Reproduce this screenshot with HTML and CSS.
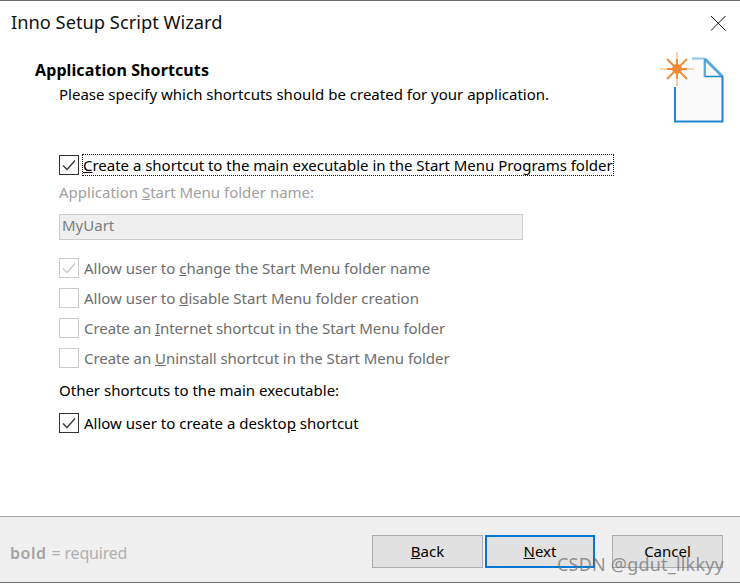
FILE: index.html
```html
<!DOCTYPE html>
<html lang="en">
<head>
<meta charset="utf-8">
<title>Inno Setup Script Wizard</title>
<link rel="stylesheet" href="styles.css">
</head>
<body>
<div class="window">
  <header class="titlebar">
    <span class="title">Inno Setup Script Wizard</span>
    <svg class="close" width="16" height="16" viewBox="0 0 16 16"><path d="M1 1L15.500 15.500M15.500 1L1 15.500" stroke="#111" stroke-width="1" fill="none"/></svg>
  </header>
  <section class="heading">
    <div class="heading-text">
      <h1 class="page-title">Application Shortcuts</h1>
      <p class="page-sub">Please specify which shortcuts should be created for your application.</p>
    </div>
    <svg class="wizard-icon" width="64" height="72" viewBox="0 0 64 72">
      <path d="M32 7.500H44.500L62.500 25.500V71.500H14.500V35" fill="#fbfbfb" stroke="none"/>
      <path d="M32 7.500H44.500V25.500H62.500" fill="none" stroke="#8cc3e6" stroke-width="2"/>
      <path d="M45 8L62.500 25.500" fill="none" stroke="#5aa9dc" stroke-width="3"/>
      <path d="M45 8V25.500H62" fill="none" stroke="#1f86c8" stroke-width="1"/>
      <path d="M62.500 25V70.500H15V36" fill="none" stroke="#1f86c8" stroke-width="2"/>
      <path d="M17 69.500H61" fill="none" stroke="#8cc3e6" stroke-width="1"/>
      <g stroke="#f6b074" stroke-width="1.200" fill="none">
        <path d="M0 18H34"/>
        <path d="M17 1V35"/>
      </g>
      <g stroke="#ef8b38" stroke-width="1.800" fill="none">
        <path d="M7 8L27 28M27 8L7 28"/>
        <path d="M7 18H27M17 8V28"/>
      </g>
      <circle cx="17" cy="18" r="5" fill="#ef8b38"/>
    </svg>
  </section>
  <main class="content">
    <label class="row first">
      <span class="box on"><svg viewBox="0 0 18 18" width="18" height="18"><path d="M3 9.500L7 13.500L15 4.500" fill="none" stroke="#333" stroke-width="1.300"/></svg></span>
      <span class="focus"><u>C</u>reate a shortcut to the main executable in the Start Menu Programs folder</span>
    </label>
    <div class="field-label"><span>Application <u>S</u>tart Menu folder name:</span></div>
    <div class="input">MyUart</div>
    <label class="row dim r1">
      <span class="box off"><svg viewBox="0 0 18 18" width="18" height="18"><path d="M3 9.500L7 13.500L15 4.500" fill="none" stroke="#c4c4c4" stroke-width="1.300"/></svg></span>
      <span>Allow user to <u>c</u>hange the Start Menu folder name</span>
    </label>
    <label class="row dim">
      <span class="box off"></span>
      <span>Allow user to <u>d</u>isable Start Menu folder creation</span>
    </label>
    <label class="row dim tight">
      <span class="box off"></span>
      <span>Create an <u>I</u>nternet shortcut in the Start Menu folder</span>
    </label>
    <label class="row dim tight">
      <span class="box off"></span>
      <span>Create an <u>U</u>ninstall shortcut in the Start Menu folder</span>
    </label>
    <div class="other">Other shortcuts to the main executable:</div>
    <label class="row desk">
      <span class="box on"><svg viewBox="0 0 18 18" width="18" height="18"><path d="M3 9.500L7 13.500L15 4.500" fill="none" stroke="#333" stroke-width="1.300"/></svg></span>
      <span>Allow user to create a deskto<u>p</u> shortcut</span>
    </label>
  </main>
  <footer class="footer">
    <div class="legend"><b>bold</b> <span class="eq">= required</span></div>
    <div class="buttons">
      <button class="btn"><u>B</u>ack</button>
      <button class="btn primary"><u>N</u>ext</button>
      <button class="btn cancel">Cancel</button>
    </div>
    <div class="watermark">CSDN @gdut_llkkyy</div>
  </footer>
</div>
</body>
</html>
```
FILE: styles.css
```css
* { box-sizing: border-box; }
html, body { margin: 0; padding: 0; background: #fff; }
body { font-family: "Noto Sans", "Open Sans", sans-serif; font-size: 15px; color: #000; }
.window { width: 740px; height: 584px; display: flex; flex-direction: column; border-top: 1px solid #6d6d6d; overflow: hidden; }
.titlebar { height: 44px; display: flex; align-items: center; justify-content: space-between; padding: 0 14px 0 11px; flex: none; }
.title { font-size: 18.3px; line-height: 42px; height: 42px; align-self: flex-start; color: #111; }
.close { display: block; margin-top: -1px; }
.heading { height: 79px; display: flex; justify-content: space-between; flex: none; padding: 0 16px 0 35px; }
.heading-text { padding-top: 13px; }
.page-title { margin: 0; font-size: 16px; line-height: 24px; font-weight: 700; letter-spacing: .1px; }
.page-sub { margin: 0 0 0 24px; font-size: 15px; line-height: 24px; }
.wizard-icon { display: block; margin-top: 6px; margin-right: 0; }
.content { flex: 1; padding: 31px 0 0 59px; }
.row { display: flex; align-items: center; height: 20px; gap: 5px; }
.box { width: 20px; height: 20px; border: 1px solid #333; background: #fff; display: block; flex: none; }
.box svg { display: block; }
.box.off { border-color: #ccc; }
.focus { outline: 1px dotted #111; padding: 0; line-height: 21px; height: 20px; white-space: nowrap; letter-spacing: -.02px; margin-left: -1px; }
.field-label { margin-top: 5px; height: 24px; line-height: 24px; color: #a0a0a0; }
.input { margin-top: 10px; width: 464px; height: 26px; border: 1px solid #ccc; background: #efefef; color: #7d7d7d; line-height: 21px; padding-left: 2px; }
.row.dim { color: #6d6d6d; margin-bottom: 10px; }
.row.r1 { margin-top: 18px; }
.row.tight { letter-spacing: -.06px; }
.other { margin-top: 1px; height: 24px; line-height: 24px; }
.row.desk { margin-top: 11px; }
.footer { position: relative; flex: none; height: 67px; background: #f0f0f0; border-top: 1px solid #a0a0a0; border-bottom: 1px solid #6d6d6d; margin-bottom: 1px; display: flex; justify-content: space-between; padding: 18px 17px 0 10px; }
.legend { font-size: 16px; line-height: 36px; color: #b0b0b0; }
.legend b { font-weight: 600; color: #a4a4a4; letter-spacing: .5px; margin-right: 1px; }
.eq { letter-spacing: -.2px; }
.buttons { display: flex; height: 33px; }
.btn { font: inherit; width: 111px; height: 33px; background: #e1e1e1; border: 1px solid #adadad; padding: 0 0 1px; color: #000; }
.btn.primary { width: 110px; margin-left: 2px; border: 2px solid #0078d7; }
.btn.cancel { margin-left: 17px; }
.watermark { position: absolute; left: 557px; top: 35px; font-size: 18px; line-height: 24px; color: rgba(110,110,110,.72); letter-spacing: .2px; }
```
